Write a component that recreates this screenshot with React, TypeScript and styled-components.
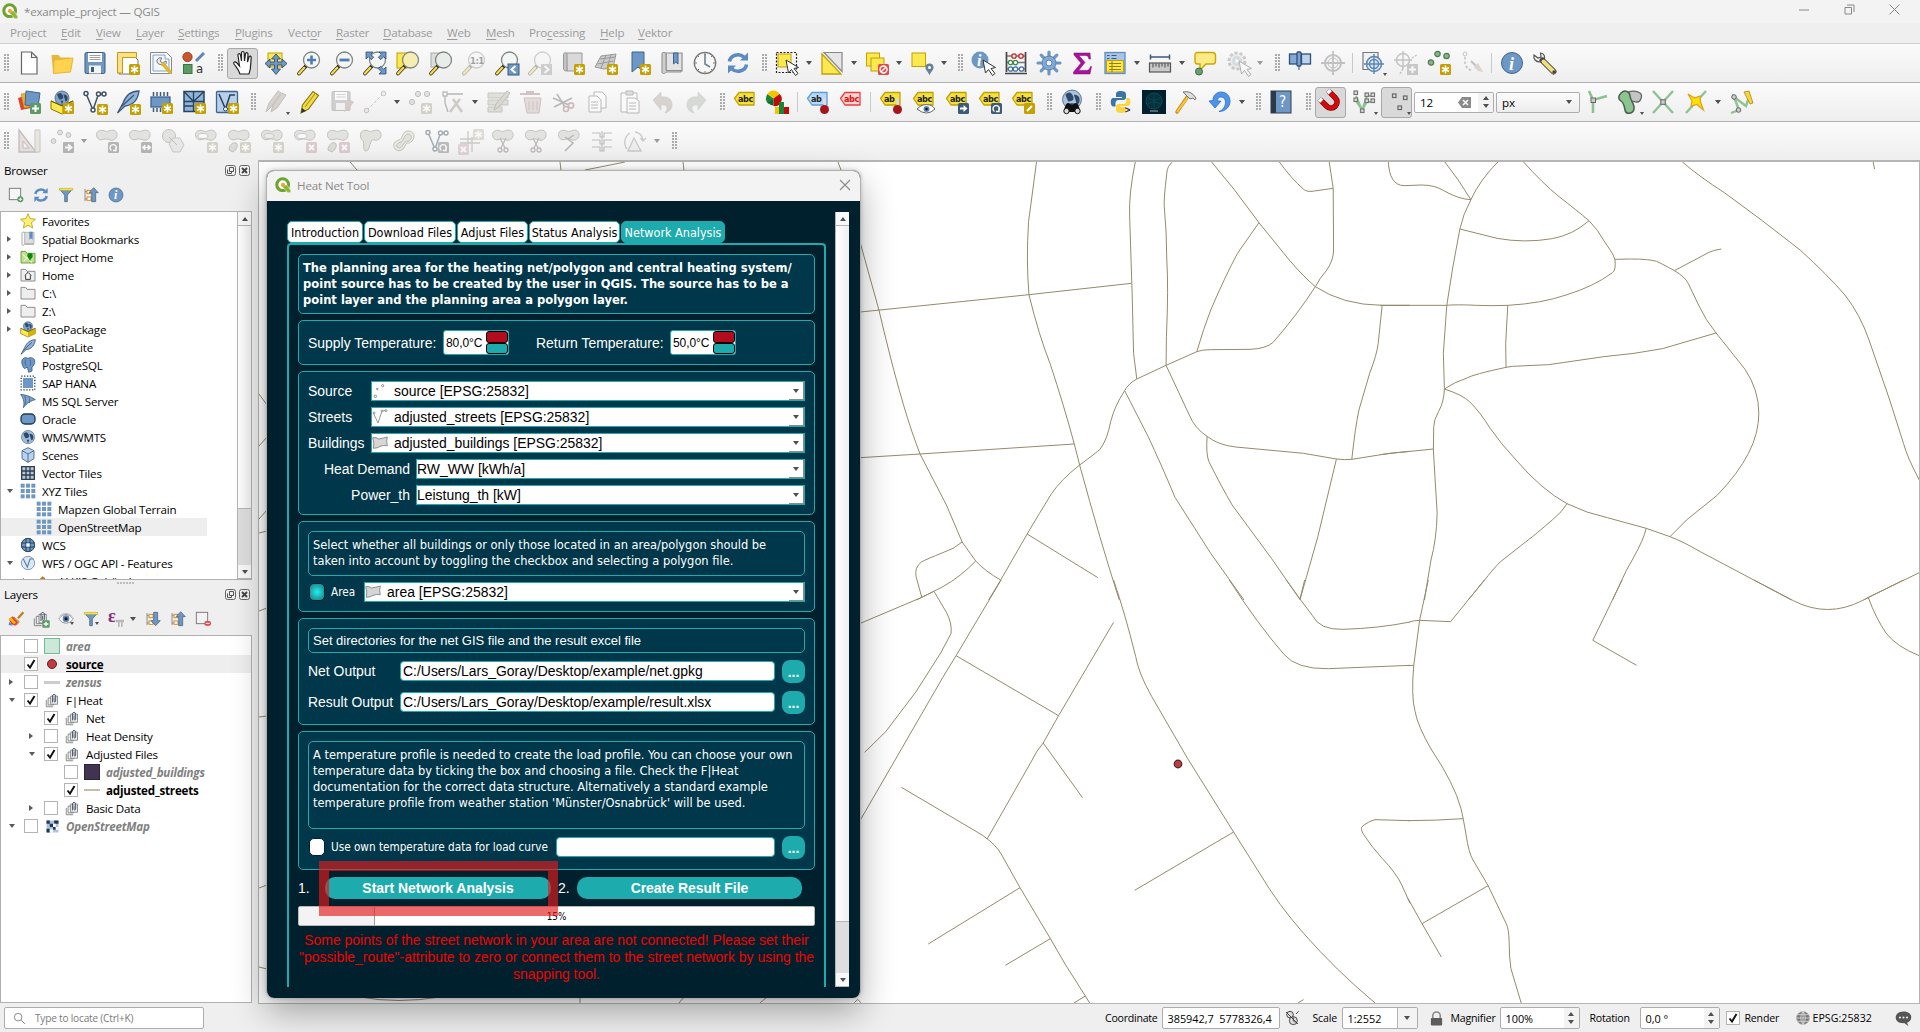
import React, { ReactNode } from "react";
import styled, { createGlobalStyle, css } from "styled-components";

/* ---------- palette ---------- */
const c = {
  teal: "#1eabad",
  deep: "#00202d",
  box: "#00374b",
  blue: "#6d97c4",
  navy: "#3d5a78",
  gold: "#c4a000",
  yellow: "#fce94f",
  green: "#8dc390",
  road: "#958a6c",
};

const ui = `"Open Sans", "Noto Sans", sans-serif`;
const dlg = `"DejaVu Sans Condensed", "DejaVu Sans", sans-serif`;
const arial = `"Liberation Sans", Arial, sans-serif`;

const Global = createGlobalStyle`
  * { box-sizing: border-box; }
  body { margin: 0; background: #efefef; overflow: hidden; }
`;

/* ---------- window frame ---------- */
const Window = styled.div`
  width: 1920px;
  height: 1032px;
  display: flex;
  flex-direction: column;
  background: #efefef;
  font-family: ${ui};
  font-size: 11.6px;
  letter-spacing: -0.2px;
  color: #000;
  overflow: hidden;
  position: relative;
  white-space: pre;
`;

const TitleBar = styled.header`
  height: 23px;
  flex: none;
  display: flex;
  align-items: center;
  gap: 6px;
  padding: 0 0 1px 2px;
  background: #f3f3f3;
  color: #8a8a8a;
`;

const WindowControls = styled.div`
  margin-left: auto;
  display: flex;
  align-items: center;
  gap: 34px;
  padding-right: 20px;
  margin-top: -3px;
`;

const MenuBar = styled.nav`
  height: 20px;
  flex: none;
  display: flex;
  align-items: center;
  padding: 0 0 2px 10px;
  background: #efefef;
  color: #9b9b9b;
`;

const MenuItem = styled.span<{ $w: number }>`
  width: ${(p) => p.$w}px;
  u { text-underline-offset: 2px; }
`;

/* ---------- toolbars ---------- */
const ToolRow = styled.div`
  height: 39px;
  flex: none;
  display: flex;
  align-items: center;
  border-top: 1px solid #cfcfcf;
  background: linear-gradient(#fbfbfb, #eeeeee);
  & + & { border-top-color: #b0b0b0; }
`;

const Handle = styled.span<{ $w: number }>`
  width: ${(p) => p.$w}px;
  height: 18px;
  display: flex;
  justify-content: flex-end;
  padding-right: 3px;
  &::after {
    content: "";
    width: 5px;
    background: radial-gradient(circle at 1px 1px, #a9a9a9 0.7px, transparent 1px) 0 0 / 3px 3px;
  }
`;

const Divider = styled.span`
  width: 7px;
  height: 20px;
  display: flex;
  justify-content: center;
  &::after { content: ""; width: 1px; background: #c9c9c9; }
`;

const ToolButton = styled.span<{ $on?: boolean }>`
  width: 31px;
  height: 31px;
  margin: 0 1px;
  flex: none;
  display: grid;
  place-items: center;
  position: relative;
  border-radius: 3px;
  border: 1px solid ${(p) => (p.$on ? "#a8a8a8" : "transparent")};
  background: ${(p) => (p.$on ? "#d9d9d9" : "transparent")};
`;

const Caret = styled.span<{ $dim?: boolean; $corner?: boolean }>`
  width: 0;
  height: 0;
  flex: none;
  border: 3px solid transparent;
  border-top: 4px solid ${(p) => (p.$dim ? "#9a9a9a" : "#4f4f4f")};
  border-bottom: 0;
  margin: 0 3px;
  ${(p) => p.$corner && css`
    position: absolute; right: 0; bottom: 2px; margin: 0;
    border-width: 3px 2px 0;
  `}
`;

const Field = styled.span<{ $w: number; $h?: number }>`
  width: ${(p) => p.$w}px;
  height: ${(p) => p.$h ?? 21}px;
  flex: none;
  display: flex;
  align-items: center;
  padding-left: 5px;
  background: #fff;
  border: 1px solid #adadad;
  border-radius: 2px;
  overflow: hidden;
`;

const ButtonField = styled(Field)`
  background: linear-gradient(#fcfcfc, #ededed);
`;

const FieldEnd = styled.span<{ $w: number; $lined?: boolean }>`
  width: ${(p) => p.$w}px;
  align-self: stretch;
  margin-left: auto;
  display: flex;
  flex-direction: column;
  align-items: center;
  justify-content: center;
  gap: 4px;
  background: #f3f3f3;
  border-left: ${(p) => (p.$lined ? "1px solid #b5b5b5" : "0")};
`;

const Up = styled.span`
  border: 3px solid transparent;
  border-bottom: 4px solid #4f4f4f;
  border-top: 0;
`;

const Down = styled.span`
  border: 3px solid transparent;
  border-top: 4px solid #4f4f4f;
  border-bottom: 0;
`;

/* ---------- icons ---------- */
type P = { fill?: string; stroke?: string };
const Badge = ({ x = 13, y = 13, k = "star", off }: { x?: number; y?: number; k?: string; off?: boolean }) => (
  <g transform={`translate(${x} ${y})`}>
    <rect width="11" height="11" rx="1.5" fill={off ? (k === "star" ? "#b5b09a" : k === "x" ? "#c4a0a8" : "#777") : k === "arrow" || k === "turn" ? c.navy : k === "plus" ? "#5b9a63" : c.gold} />
    {k === "star" && <path d="M5.5 1.5v8M2 3.5l7 4M9 3.5l-7 4" stroke="#fff" strokeWidth="1.6" fill="none" />}
    {k === "plus" && <path d="M5.5 2v7M2 5.5h7" stroke="#fff" strokeWidth="2" />}
    {k === "arrow" && <path d="M2 4.4h3.5V2L9.5 5.5 5.5 9V6.6H2z" fill="#fff" />}
    {k === "turn" && <path d="M3.500 8.5A3.200 3.200 0 1 1 7.500 8M8 4.500v4h-3" stroke="#fff" strokeWidth="1.400" fill="none" />}
    {k === "both" && <path d="M1 5.500l3-2.500v5zM10 5.500l-3-2.500v5zM3 5.500h5" fill="#fff" stroke="#fff" strokeWidth="1" />}
    {k === "x" && <path d="M3 3l5 5M8 3l-5 5" stroke="#fff" strokeWidth="2" />}
    {k === "pen" && <path d="M3 8l5-5" stroke="#fff" strokeWidth="2" />}
  </g>
);
const Lens = ({ fill = "#f4f6f4", children }: { fill?: string; children?: ReactNode }) => (
  <g>
    <path d="M2 22.500L8.500 15.500" stroke="#3a3a20" strokeWidth="3.800" strokeLinecap="round" />
    <path d="M2 22.500L7.500 16.500" stroke="#fcd94f" strokeWidth="2.200" strokeLinecap="round" />
    <path d="M8 16l1.800-2" stroke="#222" strokeWidth="3" />
    <circle cx="14.500" cy="9" r="8" fill={fill} stroke="#7f8580" strokeWidth="1.300" />
    {children}
  </g>
);
const Cursor = ({ x = 11, y = 8 }: { x?: number; y?: number }) => (
  <path transform={`translate(${x} ${y})`} d="M0 0l2.500 13 3-3.500L9.500 15.500l2.500-2-4-5 4.500-1z" fill="#fff" stroke="#333" strokeWidth="1" strokeLinejoin="round" />
);
const Blob = ({ fill = "#cfcfcb", stroke = "#8e8e88" }: P) => (
  <path d="M1.500 5.500c0-4 5-5 8-3.500s4-.5 7-.8c4-.4 6 2 5.500 5.500s-4 5.500-7.500 4-5-.5-7.500 0-5.500-1-5.500-5.200z" fill={fill} stroke={stroke} />
);
const Tag = ({ fill = "#f5e03c", stroke = "#bfa300", text = "abc", color = "#222" }: P & { text?: string; color?: string }) => (
  <g>
    <path d="M1.500 8.500l4.500-6h15v12.500H6z" fill={fill} stroke={stroke} strokeWidth="1.300" strokeLinejoin="round" />
    <text x="5" y="12" fontSize="9" fontFamily={dlg} fontWeight="700" fill={color} letterSpacing="-.4">{text}</text>
  </g>
);
const Globe = ({ x = 12, y = 12, r = 8, fill = "#7fa3cc" }) => (
  <g transform={`translate(${x} ${y})`}>
    <circle r={r} fill={fill} stroke="#4b5f75" strokeWidth=".8" />
    <path d={`M${-r * 0.7} ${-r * 0.5}q${r * 0.5} ${-r * 0.5} ${r * 0.8} ${r * 0.1}t${-r * 0.5} ${r * 0.6}zM${r * 0.2} ${-r * 0.5}q${r * 0.6} 0 ${r * 0.6} ${r * 0.5}t${-r * 0.3} ${r * 0.5}zM${-r * 0.2} ${r * 0.4}l${r * 0.4} 0l${-r * 0.2} ${r * 0.5}z`} fill="#2f4a68" />
  </g>
);
const Vee = ({ stroke = "#3f5266", fill = "#fff" }: P) => (
  <g stroke={stroke} fill={fill} strokeWidth="1.500">
    <path d="M3 3.500L10 20 15.500 4h6" fill="none" />
    <circle cx="3" cy="3.500" r="2" /><circle cx="10" cy="20" r="2" /><circle cx="15.500" cy="4" r="2" /><circle cx="21" cy="4" r="2" />
  </g>
);
const Pin = () => <g><path d="M18 8l1 8" stroke="#ddd" strokeWidth="2.500" /><circle cx="18.500" cy="19.500" r="4.500" fill="#a4161a" /></g>;
const Snips = () => (
  <g stroke="#8e7e80" fill="none" strokeWidth="1.300">
    <path d="M9 9l5 10M15 9l-5 10" /><circle cx="9" cy="21" r="2" /><circle cx="15" cy="21" r="2" />
  </g>
);
const Refresh = () => (
  <g fill="none" stroke="#5b8bc4" strokeWidth="3.600">
    <path d="M3.500 10.500A8.500 7.500 0 0 1 18 6" /><path d="M20.500 13.500A8.500 7.500 0 0 1 6 18" />
    <path d="M22 1.500v8h-8zM2 22.500v-8h8z" fill="#5b8bc4" stroke="none" />
  </g>
);
const Funnel = () => <g><path d="M2 3h20l-8 9v10h-4V12z" fill={c.blue} stroke={c.navy} /><path d="M2 2h20v3H2z" fill={c.yellow} stroke={c.gold} strokeWidth=".6" /></g>;
const Info = () => <g><circle cx="12" cy="12" r="10.500" fill="#6d97c4" stroke="#3f648f" /><text x="9" y="18.500" fontSize="18" fontFamily={`"Liberation Serif", serif`} fontStyle="italic" fontWeight="700" fill="#fff">i</text></g>;
const Grid = ({ s = c.blue }) => <g fill={s}>{[1, 9, 17].flatMap((x) => [1, 9, 17].map((y) => <rect key={`${x}${y}`} x={x} y={y} width="6" height="6" />))}</g>;
const Feather = () => <path d="M1.500 23L7 13C10 5 16 1 23 1c-1 8-5 14-14 15zM5 17L18 5" fill="#8fb3d9" stroke={c.navy} strokeWidth="1.300" />;
const Gpkg = () => (
  <g><path d="M1 11l11 4.500L23 11v8l-11 5L1 19z" fill={c.yellow} stroke="#8d7400" /><path d="M12 15.500V24l11-5v-8z" fill="#d6b500" /><Globe y={8} r={7} /><path d="M1 11l11 5 11-5" fill="none" stroke="#6c5a00" /></g>
);
const Folder = ({ fill = "#eee", stroke = "#888" }: P) => <path d="M1.500 3.500h7l2 3h12v14.500h-21z" fill={fill} stroke={stroke} strokeWidth="1.400" />;
const TreeArrow = ({ up = true }) => (
  <g>
    <path d="M3 3v18M3 7h4M3 18h4" stroke="#777" strokeWidth="1.200" fill="none" />
    <rect x="6" y="5" width="6" height="5" fill="#fff" stroke="#e08a1c" strokeWidth="1.500" /><rect x="6" y="15" width="6" height="5" fill="#fff" stroke="#e08a1c" strokeWidth="1.500" />
    <path d={up ? "M16 1l7 7.500h-4V22h-6V8.500H9z" : "M16 22l7-7.500h-4V2h-6v12.500H9z"} fill={c.blue} stroke={c.navy} strokeWidth="1" />
  </g>
);
const Group = () => (
  <g fill="#eee" stroke="#777" strokeWidth="1.300"><path d="M2 11v11h11M5 8h9v11H5z" /><path d="M9 5h11v13H9z" /><path d="M12 15V4.500c0-3 5-3 5 0V13c0 2-2.500 2-2.500 0V7" fill="none" stroke="#44546a" strokeWidth="1.500" /></g>
);
const Q = () => (
  <g>
    <circle cx="11.500" cy="11.500" r="8.800" fill="#fff" stroke="#6aa32f" strokeWidth="4.600" />
    <path d="M12 12h6l5.500 8v3.500h-4.500L12 15.500z" fill="#8db832" stroke="#fff" strokeWidth=".7" />
    <circle cx="12" cy="12" r="3.200" fill="#f2a43a" />
  </g>
);

const icons: Record<string, ReactNode> = {
  new: <path d="M4.500 1h10l5.500 5.500V23H4.500zM14.500 1v5.500H20" fill="#fff" stroke="#666" strokeWidth="1.200" />,
  open: <g><path d="M1.500 4h7l2 2.500h9V20H3z" fill="#e8b83c" /><path d="M4 9l19-2-2.500 14-17 1.500z" fill="#ffd34f" stroke="#eab52c" /></g>,
  save: <g><rect x="2" y="1.500" width="20" height="21" rx="1.500" fill={c.blue} stroke={c.navy} /><rect x="5" y="2" width="14" height="9" fill="#fff" /><path d="M6.500 4.500h11M6.500 6.500h11M6.500 8.500h11" stroke="#888" strokeWidth=".8" /><rect x="6" y="14.500" width="12" height="8" fill="#f4f4f4" /><rect x="8" y="16" width="3" height="5" fill={c.navy} /></g>,
  layout: <g><path d="M3 4h14l5 5v14H3z" fill="#fff" stroke="#777" /><path d="M1.500 1.500h19v5h-14V22h-5z" fill="#fbe08a" stroke="#c49b10" /><Badge /></g>,
  manager: <g><path d="M1.500 1.500h16l5 5v16h-21z" fill="#fff" stroke="#888" /><path d="M4 4h12v4h4v12H4z" fill="#f3f7ff" stroke="#7aa1d0" /><path d="M8 9a4 4 0 0 1 5-2l-2 3 2.500 2L17 10c1 3-1 5-3.500 4.500L12 13.500c-3 0-4.500-2-4-4.500z" fill="#eee" stroke="#777" /><path d="M14 13l7 8" stroke="#e0b62e" strokeWidth="3.500" strokeLinecap="round" /></g>,
  style: <g><circle cx="5.500" cy="6" r="4.600" fill="#c9572c" stroke="#9c3f1d" /><path d="M14 10l8-8" stroke="#5d86bb" strokeWidth="3" /><rect x="1.500" y="13.500" width="8.500" height="9" fill="#5c9c63" stroke="#3d7444" /><text x="14" y="22" fontSize="13" fontFamily={dlg} fill="#333">a</text></g>,
  hand: <path d="M9 23c-1-4-4-7-6-10-1-2 1-3 3-1l2.500 3L7 4.500c-.5-2 2-2.500 2.500-.5l1 6V2c0-2 2.500-2 2.700 0l.3 8 1-7c.3-2 2.500-1.700 2.500.3L16.500 11l1.500-5c.5-1.700 2.500-1 2.200.8C19.500 12 20.500 16 18 23z" fill="#fff" stroke="#222" strokeWidth="1.200" />,
  pan: <g><rect x="4" y="2" width="14" height="14" fill={c.yellow} stroke={c.gold} /><path d="M12 3l4.500 5h-3v3h4.500V8l5 4.500-5 4.500v-3h-4.500v4h3L12 23.500 7.500 18h3v-4H6v3l-5-4.500L6 8v3h4.500V8h-3z" fill={c.blue} stroke="#2f4f78" strokeWidth=".9" /></g>,
  zoomin: <Lens><path d="M14.500 4.500v9M10 9h9" stroke="#4d7db3" strokeWidth="2.600" /></Lens>,
  zoomout: <Lens><path d="M9.500 9h10" stroke="#4d7db3" strokeWidth="2.800" /></Lens>,
  zoomfull: <g><Lens /><path d="M3 1h7L7.700 3.300l3 3-2.400 2.400-3-3L3 8zM23 1h-7l2.300 2.300-3 3 2.400 2.400 3-3L23 8zM23 23h-7l2.300-2.300-3-3 2.400-2.400 3 3L23 16z" fill={c.blue} stroke="#2f4f78" strokeWidth=".8" /></g>,
  zoomsel: <g><rect x="1" y="2" width="10" height="15" fill={c.yellow} stroke={c.gold} /><Lens fill="#f6eeb0" /></g>,
  zoomlayer: <g><rect x="2" y="2" width="11" height="14" fill="#ddd" stroke="#aaa" /><Lens fill="#e9edea" /></g>,
  native: <g opacity=".35"><Lens><text x="8" y="12.500" fontSize="9.500" fontWeight="700" fontFamily={dlg} letterSpacing="-.5">1:1</text></Lens></g>,
  zoomlast: <g><Lens /><rect x="13" y="13" width="11" height="11" fill={c.blue} stroke={c.navy} /><path d="M20.500 15l-4 3.500 4 3.500" stroke="#fff" strokeWidth="2" fill="none" /></g>,
  zoomnext: <g opacity=".35"><Lens /><rect x="13" y="13" width="11" height="11" fill="#888" /><path d="M16.500 15l4 3.500-4 3.500" stroke="#fff" strokeWidth="2" fill="none" /></g>,
  newmap: <g><path d="M6 20h15V2H5.500z" fill="#d8d9d8" stroke="#999" /><path d="M2.500 3.500C2.500 1 6 1 6 3.500V20c-3 0-3.500-1-3.500-3z" fill="#c4c4c4" stroke="#999" /><Badge /></g>,
  new3d: <g><path d="M1 16L7 5l15-2-3 14-9 1z" fill="#ccc" stroke="#999" /><path d="M3.500 13l16-3M6 8l15-2M7 17l5-13M13 17l4-13" stroke="#999" fill="none" /><Badge /></g>,
  bookmark: <g><path d="M5 1h12v20l-6-5-6 5z" fill={c.blue} stroke="#3f648f" /><Badge /></g>,
  book: <g><path d="M2 3c0-2 4-2 4 0v17h16V2H4" fill="#e3e3e3" stroke="#8d8d8d" strokeWidth="1.200" /><path d="M2 3v18c0 2 3 2 4 0h15v-1.500H6V3" fill="#cfcfcf" stroke="#8d8d8d" /><path d="M13.500 2h4.500v11l-2.200-2-2.300 2z" fill={c.blue} stroke="#3f648f" /></g>,
  clock: <g><circle cx="12" cy="12" r="10.700" fill="#f7f7f5" stroke="#777" strokeWidth="1.300" /><path d="M12 3v10l5 3" fill="none" stroke="#6d8392" strokeWidth="1.600" /><path d="M12 2v2M12 20v2M2 12h2M20 12h2M5 5l1 1M18 18l1 1M5 19l1-1M19 5l-1 1" stroke="#777" /></g>,
  refresh: <Refresh />,
  select: <g><rect x="1.500" y="1.500" width="20" height="20" fill="none" stroke="#222" strokeWidth="1.200" strokeDasharray="2 1.500" /><rect x="3" y="3" width="13" height="13" fill={c.yellow} stroke={c.gold} /><Cursor x={11} y={9} /></g>,
  selectval: <g><path d="M2 3v20h19z" fill={c.yellow} stroke={c.gold} strokeWidth="1.300" /><path d="M4 1.500h18v19z" fill="#e6e6e6" stroke="#888" strokeWidth="1.200" /></g>,
  deselect: <g><rect x="1.500" y="2" width="13" height="13" fill={c.yellow} stroke={c.gold} /><rect x="6" y="7" width="13" height="13" fill={c.yellow} stroke={c.gold} /><rect x="13" y="13" width="11" height="11" rx="1.500" fill="#e24a4a" /><circle cx="18.500" cy="18.500" r="3.500" fill="none" stroke="#fff" strokeWidth="1.400" /><path d="M16 21l5-5" stroke="#fff" strokeWidth="1.400" /></g>,
  selectloc: <g><rect x="2" y="2" width="13.500" height="13.500" fill={c.yellow} stroke={c.gold} /><path d="M19.500 24c-2-4-4-5-4-7.500a4 4 0 0 1 8 0c0 2.500-2 3.500-4 7.500z" fill="#65819a" /><circle cx="19.500" cy="16.500" r="1.500" fill="#fff" /></g>,
  identify: <g><circle cx="9" cy="9" r="8.500" fill={c.blue} /><text x="6" y="15" fontSize="16" fontStyle="italic" fontWeight="700" fontFamily={`"Liberation Serif", serif`} fill="#fff">i</text><Cursor x={12} y={9} /></g>,
  abacus: <g fill="none" strokeWidth="1.300"><path d="M2.500 1v20M21.500 1v20M1 22.500h22" stroke="#444" strokeWidth="1.700" /><path d="M3 5h18M3 11.500h18M3 18h18" stroke="#777" /><g fill="#fff"><g stroke="#c22"><circle cx="10" cy="5" r="2.200" /><circle cx="17" cy="5" r="2.200" /></g><g stroke="#3a8c4a"><circle cx="6.500" cy="11.500" r="2.200" /><circle cx="11.500" cy="11.500" r="2.200" /></g><g stroke="#456f9c"><circle cx="6.500" cy="18" r="2.200" /><circle cx="11.500" cy="18" r="2.200" /><circle cx="17.500" cy="18" r="2.200" /></g></g></g>,
  gear: <g><path d="M12 1v22M1 12h22M4.200 4.200l15.600 15.600M19.800 4.200L4.200 19.800" stroke="#6d97c4" strokeWidth="3.200" strokeLinecap="round" /><circle cx="12" cy="12" r="7" fill="#84a9d4" stroke="#5580b3" /><circle cx="12" cy="12" r="3" fill="#f3f3f3" stroke="#5580b3" /></g>,
  sigma: <path d="M4 2h16l.5 6H19c-.5-2.500-1.500-3.500-4-3.500H9l6 7-6.500 8H16c2.500 0 3.500-1 4.500-4h1L20 23H3.500v-2l7.500-9-7-8z" fill="#a8129c" stroke="#7c0c73" strokeWidth=".5" />,
  table: <g><rect x="2" y="1.500" width="20" height="21" fill="#a9c5e6" stroke="#5f8dc2" strokeWidth="1.300" /><path d="M4 4.500h2.500M8.500 4.500h5M4 7.500h2.500M8.500 7.500h5" stroke="#3d5a78" strokeWidth="1.200" /><rect x="3.500" y="9.500" width="17" height="11.500" fill={c.yellow} stroke={c.gold} /><path d="M6 12.500h12M6 15.500h12M6 18.500h12M9 10v11" stroke="#9a7d00" strokeWidth="1" /></g>,
  ruler: <g><path d="M2.500 6h19M2.500 3.500v5M21.500 3.500v5" stroke={c.navy} strokeWidth="1.500" /><rect x="1.500" y="12" width="21" height="9" fill="#c9c9c9" stroke="#555" strokeWidth="1.200" /><path d="M5 12.500v4M8 12.500v3M11 12.500v4M14 12.500v3M17 12.500v4M20 12.500v3" stroke="#444" /></g>,
  tip: <g><path d="M2 4q0-2.500 2.500-2.500h15Q22 1.500 22.500 4v6q0 3-2.500 3h-7l-6 6V13H4.500Q2 13 2 10z" fill="#fbea85" stroke="#c9a700" strokeWidth="1.400" /><circle cx="6" cy="20.500" r="3.500" fill="#6b9f6e" stroke="#3d6b40" /></g>,
  action: <g opacity=".35"><circle cx="11" cy="10" r="8" fill="#ddd" stroke="#777" strokeWidth="3" strokeDasharray="3 2" /><circle cx="11" cy="10" r="5" fill="#9ab" /><path d="M9.500 7.500l4 2.500-4 2.500z" fill="#fff" /><Cursor x={13} y={10} /></g>,
  swipe: <g><rect x="1.500" y="3" width="9" height="10" fill="#84a9d4" stroke="#2f4f78" strokeWidth="1.300" /><rect x="13.500" y="3" width="9" height="10" fill="#b9d3ee" stroke="#2f4f78" strokeWidth="1.300" /><rect x="9" y="1" width="4" height="14" rx="1" fill="#7da2cf" stroke="#2f4f78" strokeWidth="1.300" /><path d="M11 15v4" stroke="#2f4f78" /></g>,
  gps: <g opacity=".4" stroke="#777" fill="none"><circle cx="12" cy="12" r="8" strokeWidth="2" /><circle cx="12" cy="12" r="5" /><path d="M12 0v24M0 12h24" strokeWidth="1.800" /></g>,
  gpsmap: <g><path d="M2 1.500h15v17H2z" fill="#f2f2f2" stroke="#777" strokeWidth="1.200" /><g stroke="#5b86b8" fill="#dfe9f4" strokeWidth="1.500"><circle cx="13" cy="13" r="7.500" /><circle cx="13" cy="13" r="4.500" /><path d="M13 3v20M3 13h20" /></g></g>,
  gpsadd: <g opacity=".4"><g stroke="#777" fill="none" strokeWidth="1.400"><circle cx="9" cy="9" r="6.500" /><path d="M9 0v18M0 9h18" /><path d="M9 18l-4 6M18 7l5-3" strokeDasharray="2 1.500" /></g><rect x="13" y="13" width="11" height="11" fill="#888" /><path d="M18.500 15v7M15 18.500h7" stroke="#fff" strokeWidth="2" /></g>,
  gpspts: <g><g fill="#83b986" stroke="#4f7a52" strokeWidth="1.200"><circle cx="10.500" cy="3" r="2.700" /><circle cx="19.500" cy="5" r="2.700" /><circle cx="4" cy="11.500" r="2.700" /></g><Badge /></g>,
  gpsreset: <g opacity=".4" fill="none" stroke="#777"><circle cx="5" cy="3" r="2" /><path d="M5 6v6q1 6 8 8" strokeDasharray="2.500 2" strokeWidth="1.500" /><path d="M11 10l5 5" strokeWidth="2" /><path d="M14 16l4-4 5 9-5-1z" fill="#b9a695" stroke="none" /></g>,
  info: <Info />,
  wrench: <g><path d="M1 4l4 3 3-1-.5-4C11 2 13 6 10.500 9.500L7 11C3 11 0 8 1 4z" fill="#eee" stroke="#555" strokeWidth="1.200" /><path d="M9.500 9.500l11 11" stroke="#444" strokeWidth="6" strokeLinecap="round" /><path d="M10.500 10.500l10 10" stroke="#f2dc7c" strokeWidth="4" strokeLinecap="round" /><path d="M20 20l2 2" stroke="#444" strokeWidth="3" /></g>,

  addlayer: <g><path d="M1 8l10-3 3 13-10 2z" fill="#d8452b" /><path d="M4 4l12-2 2 14-11 2z" fill="#efb02f" stroke="#b97c10" strokeWidth=".5" /><path d="M9 1l14 2-2 14-13-2z" fill="#6d97c4" stroke="#41658f" /><Badge k="plus" /></g>,
  gpkg: <g><Gpkg /><Badge /></g>,
  newshp: <g><Vee /><Badge x={14} y={14} /></g>,
  newspl: <g><Feather /><Badge x={14} y={14} /></g>,
  newmem: <g><rect x="2" y="7" width="19" height="10" fill={c.blue} stroke="#3f648f" strokeWidth="1.300" /><path d="M4.500 2v4M8 2v4M11.500 2v4M15 2v4M18.500 2v4M4.500 18v4M8 18v4M11.500 18v4" stroke={c.navy} strokeWidth="1.500" /><Badge /></g>,
  newmesh: <g><rect x="2" y="1.500" width="20" height="20" fill="#8fb3d9" stroke="#27415f" strokeWidth="1.500" /><path d="M2 11.500h20M11.500 1.500v20M2 1.500l9.500 10L22 1.500M2 16h9" stroke="#27415f" strokeWidth="1.300" fill="none" /><Badge /></g>,
  newvirt: <g><rect x="1.500" y="1.500" width="21" height="21" rx="1" fill="#b9d0ea" stroke="#3f648f" strokeWidth="1.300" /><path d="M4 4l6.500 15L15 5h5" fill="none" stroke="#27415f" strokeWidth="1.500" /><circle cx="10.500" cy="19" r="2" fill="#fff" stroke="#27415f" /><Badge /></g>,
  pencils: <g opacity=".45"><path d="M2 22l3-9L14 1l3 2-9 13zM7 22l2-7 9-12 4 2-9 13z" fill="#b3a79b" stroke="#8a8078" /></g>,
  pencil: <g><path d="M4 23l1.500-8L16 1.500l5.500 4L11.500 19z" fill="#f0dc4d" stroke="#8a7a13" strokeWidth="1.200" /><path d="M4 23l1-5 4 3z" fill="#333" /><path d="M8 17L18.500 3" stroke="#b39b16" strokeWidth="1.200" /></g>,
  savee: <g opacity=".4"><rect x="2" y="1.500" width="18" height="19" rx="1" fill="#999" stroke="#777" /><rect x="5" y="2" width="12" height="8" fill="#fff" /><path d="M6.500 4.500h9M6.500 7h9" stroke="#999" /><rect x="6" y="13" width="9" height="7" fill="#eee" /><path d="M14 22l2-6 5-6 3 2-6 8z" fill="#b58a82" /></g>,
  digitize: <g opacity=".45" fill="#ddd" stroke="#888"><path d="M4 20L20 4" strokeDasharray="3 2" /><circle cx="3.500" cy="20.500" r="2.300" /><circle cx="20.500" cy="3.500" r="2.300" /></g>,
  addpts: <g opacity=".5"><g fill="#cfcfcb" stroke="#888"><circle cx="10" cy="4" r="2.600" /><circle cx="19" cy="4" r="2.600" /><circle cx="4" cy="12" r="2.600" /></g><Badge off /></g>,
  vertex: <g opacity=".5" fill="none" stroke="#777" strokeWidth="1.300"><path d="M4 4h18M4 4v9l3 9" /><rect x="2" y="2" width="4" height="4" fill="#fff" /><path d="M9 22L19 9M12 9l9 13" strokeWidth="2.600" stroke="#a8a49b" /></g>,
  modattr: <g opacity=".5"><path d="M2 3h20v5H2zM2 10h20v5H2zM2 17h14v5H2z" fill="#c9cbb8" stroke="#999" /><path d="M8 20l2-6L21 1l3 2-11 14z" fill="#c5bfa5" stroke="#888" /></g>,
  trash: <g opacity=".42"><path d="M1 4h20M8 4V2h6v2" stroke="#a07a7a" strokeWidth="2" fill="none" /><path d="M5 8h17l-2 15H8z" fill="#ccbcbc" stroke="#a07a7a" /><path d="M10 11v9M14 11v9M18 11v9" stroke="#a07a7a" /></g>,
  cut: <g opacity=".55" stroke="#888" fill="none" strokeWidth="1.600"><path d="M1 8l16 7M2 17l18-9" /><circle cx="19" cy="15.500" r="2.600" stroke="#b08c8c" /><circle cx="14" cy="19" r="2.500" stroke="#b08c8c" /><path d="M5 4l8 13" /></g>,
  copy: <g opacity=".55" fill="#fff" stroke="#888"><path d="M9 2h8l4 4v12H9z" /><path d="M4 6h8l4 4v12H4z" /><path d="M6 12h7M6 15h7M6 18h7" /></g>,
  paste: <g opacity=".55" fill="#fff" stroke="#888"><path d="M3 3h16v19H3z" /><path d="M8 1h7v4H8z" fill="#ccc" /><path d="M9 8h8l4 3v12H9z" /><path d="M11 13h7M11 16h7M11 19h7" /></g>,
  undo: <path opacity=".45" d="M2 10l8-8v5c8-1 11 3 11 8 0 4-3 7-7 8 4-5 2-9-4-8v5z" fill="#b7a9a4" stroke="#9d918c" strokeWidth=".6" />,
  redo: <path opacity=".45" d="M22 10l-8-8v5c-8-1-11 3-11 8 0 4 3 7 7 8-4-5-2-9 4-8v5z" fill="#b4b9b0" stroke="#98a09a" strokeWidth=".6" />,
  tag: <Tag />,
  diagram: <g><path d="M7.500 8.500L1.500 4a7 7 0 0 0 1 10z" fill="#18843c" /><path d="M7.500 8.500L1.500 4a7 7 0 0 1 12 0z" fill="#f5c400" /><path d="M7.500 8.500L13.500 4a7 7 0 0 1-6 12z" fill="#c00a0a" /><path d="M7.500 8.500v7a7 7 0 0 1-5.500-3z" fill="#0d6b2c" /><path d="M9 17h4v7H9z" fill="#f5c400" /><path d="M13 12h5v12h-5z" fill="#18843c" /><path d="M18 17h5v7h-5z" fill="#c00a0a" /></g>,
  taginfo: <g><Tag fill="#b8daf8" stroke="#5a9ee0" text="ab" /><Pin /></g>,
  tagred: <Tag fill="#fcd5d5" stroke="#f03c3c" color="#e01010" />,
  tagpin: <g><Tag text="ab" /><Pin /></g>,
  tageye: <g><Tag /><path d="M5 19q6-6 13-4 3 1 5 4-4 4-8.500 4T5 19z" fill="#fff" stroke="#666" /><circle cx="14.500" cy="19" r="3" fill="#5b86b8" /><circle cx="14.500" cy="19" r="1.200" fill="#000" /></g>,
  tagmove: <g><Tag /><Badge k="arrow" /></g>,
  tagrot: <g><Tag /><Badge k="turn" /></g>,
  tagpen: <g><Tag /><Badge k="pen" /></g>,
  binoc: <g><Globe y={9.500} r={9.500} fill="#a9c2de" /><path d="M4 22c0-4 2-9 4-9s3 2 4 2 2-2 4-2 4 5 4 9z" fill="#111" /><circle cx="6.500" cy="21" r="2.700" fill="#ddd" stroke="#111" /><circle cx="17.500" cy="21" r="2.700" fill="#ddd" stroke="#111" /></g>,
  python: <g><path d="M12 1c-4 0-5 1.500-5 3v3h6v1H4c-3 0-3 8 0 8.500h2.500V13c0-2 1.500-3 3-3H14c2 0 3-1 3-2.500V4c0-2-2-3-5-3z" fill="#3c74a8" /><path d="M12 23c4 0 5-1.500 5-3v-3h-6v-1h8c3 0 3-7 1-8h-2.500v3c0 2-1.500 3-3 3H9.500C8 14 7 15 7 17v3c0 2 2 3 5 3z" fill="#fcd43f" /><text x="16" y="23" fontSize="9" fontFamily={arial} fill="#333" stroke="#333" strokeWidth=".4">&gt;</text></g>,
  fheat: <g><rect x="0" y="0" width="24" height="24" fill="#00202d" /><circle cx="12" cy="11" r="8" fill="#06303c" stroke="#0d5660" strokeWidth=".8" /><path d="M12 4v14M6 8q6 4 12 0M6 14q6-4 12 0" stroke="#0d5660" fill="none" strokeWidth=".6" /><path d="M8 21h8" stroke="#ccc" strokeWidth=".8" /></g>,
  hammer: <g><path d="M2 22L13 6" stroke="#d18a12" strokeWidth="3.500" strokeLinecap="round" /><path d="M2.500 21.500L12 8" stroke="#fbc63c" strokeWidth="2" strokeLinecap="round" /><path d="M8 2q8-2 13 6l-1 2-2-2-3 1-3-3z" fill="#ddd" stroke="#777" /></g>,
  reload: <path d="M5 10.500C5 5 9 2 13 2c5.500 0 9 4 9 9 0 6-4.500 10.500-11 10.500 4-1.500 6.500-5 6.500-9.500 0-3-2-5-4.500-5S9.500 8.500 9.500 11H13l-6 7-6-7z" fill="#4d93ea" stroke="#2a6fc9" strokeWidth=".8" />,
  help: <g><rect x="2" y="1" width="20" height="22" fill={c.blue} stroke="#333f4d" /><rect x="2" y="1" width="5" height="22" fill="#2b3a4a" /><text x="10" y="17" fontSize="15" fontFamily={dlg} fill="#fff">?</text></g>,
  magnet: <g transform="rotate(-45 12 12) translate(0 -1)"><path d="M6 4v9a6 6 0 0 0 12 0V4" fill="none" stroke="#6b0000" strokeWidth="5.600" /><path d="M6 4v9a6 6 0 0 0 12 0V4" fill="none" stroke="#d10b0b" strokeWidth="4.600" /><path d="M3.700 2.500h4.600v3.500H3.700zM15.700 2.500h4.600v3.500h-4.600z" fill="#fff" stroke="#888" strokeWidth=".6" /></g>,
  snaplayer: <g fill="#ddd" stroke={c.green} strokeWidth="2"><path d="M4 6l6 14 5-14h7M4 11l6 9 5-8h7" fill="none" /><g stroke="#777" strokeWidth="1.200"><rect x="2" y="1" width="3.500" height="3.500" /><rect x="2" y="8" width="3.500" height="3.500" /><rect x="13" y="3" width="3.500" height="3.500" /><rect x="19" y="3" width="3.500" height="3.500" /><rect x="13" y="9" width="3.500" height="3.500" /><rect x="19" y="9" width="3.500" height="3.500" /><rect x="8.500" y="19" width="3.500" height="3.500" /></g></g>,
  snappts: <g fill="#ddd" stroke="#666" strokeWidth="1.200"><rect x="7.500" y="4" width="3.500" height="3.500" /><rect x="18.500" y="6" width="3.500" height="3.500" /><rect x="13" y="16" width="3.500" height="3.500" /></g>,
  topo: <g><path d="M4 1l4 9v13M8 10l14-4" fill="none" stroke={c.green} strokeWidth="2.600" /><rect x="6" y="8" width="4.500" height="4.500" fill="#ccc" stroke="#666" /></g>,
  overlap: <g><path d="M9 3c3-3 10-2 13 0s1 9-3 9-6-2-8 0z" fill="#c4c4c4" stroke="#666" strokeWidth="1.300" /><path d="M3 3c4-4 9-1 9 3s5 8 4 13-8 6-9 1-1-7-4-9-3-5 0-8z" fill="#8cc48f" stroke="#4e5e4f" strokeWidth="1.500" /></g>,
  inter: <g><path d="M2 1l20 22M22 1L2 23" stroke={c.green} strokeWidth="2.400" /><rect x="9.800" y="9.800" width="4.500" height="4.500" fill="#ccc" stroke="#666" /></g>,
  selfsnap: <g><path d="M22 1L2 23" stroke={c.green} strokeWidth="2.400" /><path d="M4 4l6.500 4 5.500-2 .5 6 3 8-6.500-5.500-6 1.500 1-5z" fill="#ffe100" stroke="#e0a01c" strokeWidth="1.200" /></g>,
  trace: <g><path d="M2 23l8-3L5 7l12 9 3-9" fill="none" stroke={c.green} strokeWidth="2.400" /><circle cx="5" cy="7" r="2.300" fill="#ccc" stroke="#666" /><circle cx="9.500" cy="20" r="2.300" fill="#ccc" stroke="#666" /><path d="M15 2l5-1 4 12-3 1z" fill="#fbd33c" stroke="#a88a10" strokeWidth=".8" /></g>,

  square: <g opacity=".5"><path d="M2 1v22h17z" fill="#ddc9c0" stroke="#888" strokeWidth="1.300" /><path d="M6 12v7h6z" fill="#f5f5f5" stroke="#888" /><path d="M18 1h5v22h-5z" fill="#ddd9c0" stroke="#999" /></g>,
  move: <g opacity=".5"><g fill="#cfcfcb" stroke="#888"><circle cx="10" cy="3.500" r="2.400" /><circle cx="18.500" cy="6" r="2.400" /><circle cx="3.500" cy="12" r="2.400" /></g><rect x="13" y="13" width="11" height="11" rx="1" fill="#777" /><path d="M15 18.500h5M18 15.500l3.500 3-3.500 3" stroke="#fff" strokeWidth="1.800" fill="none" /></g>,
  rot: <g opacity=".5"><Blob /><Badge x={13} off k="turn" /></g>,
  scale: <g opacity=".5"><Blob /><Badge x={13} off k="both" /></g>,
  simplify: <g opacity=".5"><circle cx="8" cy="7" r="6.500" fill="#cfcfcb" stroke="#8e8e88" /><path d="M8 15l4-6h7l4 7-4 7h-7z" fill="#dcdcda" stroke="#999" /><path d="M8 8l8 8" stroke="#888" /></g>,
  ring: <g opacity=".5"><Blob /><ellipse cx="9" cy="7" rx="5" ry="2.500" fill="#fff" stroke="#999" /><Badge off /></g>,
  part: <g opacity=".5"><Blob /><path d="M2 21c0-5 4-8 7-7s0 8-3 9z" fill="#c4c4be" stroke="#8e8e88" /><Badge off /></g>,
  fill: <g opacity=".5"><Blob /><ellipse cx="9" cy="7" rx="5" ry="2.500" fill="#e4e4e0" stroke="#999" /><Badge off /></g>,
  delring: <g opacity=".5"><Blob /><ellipse cx="9" cy="7" rx="5" ry="2.500" fill="#fff" stroke="#999" /><Badge off k="x" /></g>,
  delpart: <g opacity=".5"><Blob /><path d="M2 21c0-5 4-8 7-7s0 8-3 9z" fill="#c4c4be" stroke="#8e8e88" /><Badge off k="x" /></g>,
  reshape: <path opacity=".5" d="M1.500 5.500c0-4 5-5 8-3.500s4-.5 7-.8c4-.4 6 2 5.500 5.500s-4 5.500-7.500 4S11 22 7 22 6 14 4 12s-2.500-2.300-2.500-6.500z" fill="#cfcfc6" stroke="#8e8e80" />,
  offset: <g opacity=".5"><path d="M3 20c-3-5 0-8 4-9s3-9 9-9 8 6 4 10-5 0-7 5-7 6-10 3z" fill="#e4e4d8" stroke="#8e8e80" /><path d="M5 18c-1-3 1-4 4-5s3-8 7-8 4 4 2 6-5 1-7 5-5 3-6 2z" fill="#cfcfc6" stroke="#8e8e80" /></g>,
  split: <g opacity=".45"><Vee /><Badge off k="turn" /></g>,
  merge: <g opacity=".4" stroke="#888" fill="none" strokeWidth="1.300"><path d="M2 10h20M2 14h20M10 2v20M14 8v15" /><g stroke="none"><Badge x={15} y={0} off /><Badge x={0} y={15} off k="x" /></g></g>,
  splitf: <g opacity=".5"><Blob /><Snips /></g>,
  splitp: <g opacity=".5"><Blob /><Snips /></g>,
  mergef: <g opacity=".5"><Blob /><path d="M8 8l8 6-8 8M17 6l-6 4" stroke="#777" fill="none" strokeWidth="1.500" /></g>,
  mergea: <g opacity=".45" stroke="#777" fill="none" strokeWidth="1.100"><path d="M2 4h8v4h4V4h8M2 11h8v4h4v-4h8M2 18h8v4h4v-4h8M12 2v20" /></g>,
  rotpt: <g opacity=".4" stroke="#888" fill="none" strokeWidth="1.300"><path d="M12 3q7 1 8 8M17.500 9l2.500 3 3-3M10 12v11M4 20a11 11 0 0 1 3-16" /><path d="M11 9l7 13H5z" fill="#e4e4e4" /></g>,

  addsel: <g><rect x="2" y="2" width="17" height="17" fill="#f6f6f6" stroke="#777" strokeWidth="1.400" /><circle cx="18.500" cy="18.500" r="4.500" fill="#5b9a63" /><path d="M18.500 16v5M16 18.500h5" stroke="#fff" strokeWidth="1.300" /></g>,
  funnel: <Funnel />,
  collapse: <TreeArrow />,
  expand: <TreeArrow up={false} />,
  brush: <g><path d="M23 2l-8 9" stroke="#c47e1d" strokeWidth="3.500" /><path d="M9 9l8 7-4 5-9-8z" fill="#e5a24a" stroke="#b5762a" /><path d="M1 12l6-4 8 9-4 5-6-2z" fill="#e43f3f" /><path d="M1 12l4-2.500 7 8-3 2z" fill="#f5c400" /><path d="M2 16l5 6-6-1z" fill="#4a86d8" /></g>,
  addgroup: <g><Group /><Badge k="plus" x={14} y={14} /></g>,
  eye: <g><path d="M1 12q5-7 11-7t11 7q-5 6.500-11 6.500T1 12z" fill="#fff" stroke="#888" strokeWidth="1.300" /><circle cx="12" cy="11.500" r="5" fill="#5b86b8" /><circle cx="12" cy="11.500" r="2.300" fill="#111" /><path d="M2 8q9-9 20 0" stroke="#aaa" fill="none" /></g>,
  expr: <g><text x="0" y="16" fontSize="27" fontFamily={`"Liberation Serif", serif`} fontWeight="700" fill="#86327d">ε</text><path d="M12 13h12v4h-2v7h-2.500v-7h-2v7h-2.500v-7h-3z" fill="#b9b9b9" /></g>,
  remove: <g><rect x="2" y="2" width="17" height="17" fill="#f2f2f2" stroke="#777" strokeWidth="1.400" /><rect x="14" y="15" width="10" height="7" rx="3" fill="#e24a4a" /><path d="M16 18.500h6" stroke="#fff" strokeWidth="1.500" /></g>,

  star: <path d="M12 1l3.200 7.500 8 .7-6 5.300 1.800 8L12 18.300 5 22.500l1.800-8-6-5.300 8-.7z" fill="#fdf17a" stroke="#b99a00" strokeWidth="1.200" />,
  sbook: <g><path d="M3 3c0-2 4-2 4 0v16h14V2H5" fill="#ddd" stroke="#aaa" strokeWidth="1.200" /><path d="M3 3v17c0 2 3 2 4 0h14" fill="none" stroke="#aaa" strokeWidth="1.500" /><path d="M14 1h5v12l-2.500-2-2.500 2z" fill="#5d8dc4" /></g>,
  phome: <g><Folder fill="#c0e08a" stroke="#6d9b3a" /><path d="M4 8l14 12M6 18l6-6" stroke="#fff" strokeWidth="1.500" /><circle cx="15" cy="10" r="4" fill="#0a8a0a" /><path d="M11.500 11l3.500 7 3.500-7z" fill="#0a8a0a" /></g>,
  home: <g><Folder /><path d="M7 13l5-5 5 5M8.500 12.500v6h7v-6" fill="#fff" stroke="#333" strokeWidth="1.500" /></g>,
  folder: <Folder />,
  spkg: <Gpkg />,
  feather: <Feather />,
  pg: <g><path d="M5 2c3-2 6 0 7 0 3-2 9-1 10 3s-2 9-4 10v6l-5 2-2-8-2 1c-2 3-4 0-5-3C2 9 2 4 5 2z" fill={c.blue} stroke="#2f5580" strokeWidth="1.200" /><path d="M8 4q-1 6 1 9M15 4q2 4 0 9" stroke="#2f5580" fill="none" /></g>,
  hana: <g><rect x="4.500" y="4.500" width="15" height="15" fill="#6d97c4" /><rect x="1.800" y="1.800" width="20.400" height="20.400" fill="none" stroke="#27415f" strokeWidth="2" strokeDasharray="2 2.300" /></g>,
  mssql: <path d="M1 2c8 1 15 3 22 8-6 1-13 5-18 12 2-6 1-13-4-20zM7 4c2 5 2 10 0 14M13 6c2 3 2 6 1 9" fill="#7ea3cd" stroke="#3f648f" strokeWidth="1.300" />,
  oracle: <rect x="1.500" y="4.500" width="21" height="15" rx="6" fill={c.blue} stroke="#1f3a5a" strokeWidth="2" />,
  globe: <Globe r={10} fill="#9dbbdd" />,
  scenes: <g fill="#bcd2ea" stroke="#3f648f" strokeWidth="1.300"><path d="M12 1l9 4.500v12L12 23l-9-5.500v-12z" /><path d="M3 5.500l9 5 9-5M12 10.500V23" /></g>,
  vtiles: <path d="M2.500 2.500h19v19h-19zM2.500 9h19M2.500 15h19M9 2.500v19M15 2.500v19" fill="#b9c8d8" stroke="#2f3f52" strokeWidth="2" />,
  grid: <Grid />,
  wcs: <g><circle cx="12" cy="12" r="10" fill="#6d97c4" stroke="#27415f" strokeWidth="1.500" /><path d="M2 9h20M2 15h20M9 2v20M15 2v20" stroke="#27415f" strokeWidth="1.500" /><path d="M9.500 9.500h5v5h-5z" fill="#fff" /></g>,
  wfs: <g><circle cx="12" cy="12" r="10" fill="#dbe7f4" stroke="#6d8fb5" strokeWidth="1.300" /><path d="M5 6l6 12 4-12h5" fill="none" stroke="#5a7ba3" strokeWidth="1.600" /></g>,
  afs: <path d="M2 12l8-7 4 3-5 8z" fill="#c47e1d" />,
  group: <Group />,
  raster: <g><rect x="1" y="1" width="22" height="22" fill="#a9c3e6" /><path d="M1 1h6v6H1zM15 1h8v6h-8zM7 7h6v6H7zM13 13h5v5h-5zM1 16h6v7H1z" fill="#243450" /><path d="M13 7h5v6h-5zM7 17h6v6H7zM18 13h5v5h-5z" fill="#fff" /></g>,
  logo: <Q />,
  points: <g fill="none" stroke="#777" strokeWidth="1.300"><circle cx="16" cy="4" r="1.600" /><circle cx="8" cy="9" r="1.200" /><circle cx="5" cy="20" r="1.800" /></g>,
  lines: <g fill="#fff" stroke="#888" strokeWidth="1.300"><path d="M2 6l7 15 6-18 7-1" fill="none" /><circle cx="3" cy="6" r="1.500" /><circle cx="15" cy="3" r="1.500" /><circle cx="21" cy="2.500" r="1.500" /></g>,
  poly: <path d="M1 4q6-1 9 2 6-1 13-3-2 6 0 13-6-1-11 1-4 3-10 3 2-8-1-16z" fill="#d6d6d6" stroke="#888" strokeWidth="1.400" />,
  gpsmouse: <g stroke="#333" fill="#ddd" strokeWidth="1.300"><circle cx="9" cy="7" r="5" /><circle cx="14" cy="16" r="6" /><path d="M3 3l18 18M14 11v5l3 3M18 6l4-4" fill="none" /></g>,
  lock: <g><path d="M6 11V7.500a6 6 0 0 1 12 0V11" fill="none" stroke="#8a8a8a" strokeWidth="2.500" /><rect x="3" y="11" width="18" height="12" rx="1.500" fill="#5c5c5c" /></g>,
  crs: <g stroke="#999" fill="none" strokeWidth="1.200"><circle cx="12" cy="12" r="9.500" fill="#777" /><path d="M2 12h20M4 7h16M4 17h16M12 2v20M12 2q-7 10 0 20M12 2q7 10 0 20" stroke="#ddd" /></g>,
  bubble: <g><path d="M12 2c7 0 11 3.500 11 8s-3 7-6 8l2 5-6-4.500C5 19 1 15 1 10.500S5 2 12 2z" fill="#555" /><g fill="#efefef"><circle cx="7" cy="10.500" r="1.500" /><circle cx="12" cy="10.500" r="1.500" /><circle cx="17" cy="10.500" r="1.500" /></g></g>,
  search: <g fill="none" stroke="#777" strokeWidth="1.600"><circle cx="9.500" cy="9.500" r="7" /><path d="M15 15l7 7" /></g>,
};

const Svg = styled.svg`
  display: block;
  flex: none;
  overflow: visible;
`;
const Icon = ({ n, s = 24 }: { n: string; s?: number }) => (
  <Svg width={s} height={s} viewBox="0 0 24 24">{icons[n]}</Svg>
);

/* A tool spec: "name", "name>" (menu arrow), "name>~" (dim arrow), "name." (corner arrow), "name!" (pressed), "|" divider, ":" handle */
const Tools = ({ spec }: { spec: string }) => (
  <>
    {spec.split(" ").map((t, i) => {
      if (t === "|") return <Divider key={i} />;
      if (t[0] === ":") return <Handle key={i} $w={+t.slice(1) || 16} />;
      const name = t.replace(/[^a-z0-9]/g, "");
      return (
        <React.Fragment key={i}>
          <ToolButton $on={t.includes("!")}>
            <Icon n={name} />
            {t.includes(".") && <Caret $corner />}
          </ToolButton>
          {t.includes(">") && <Caret $dim={t.includes("~")} />}
        </React.Fragment>
      );
    })}
  </>
);

/* ---------- body ---------- */
const Body = styled.div`
  flex: 1;
  display: grid;
  grid-template-columns: 252px 1fr;
  column-gap: 6px;
  min-height: 0;
  position: relative;
`;

const Side = styled.aside`
  display: flex;
  flex-direction: column;
  padding-top: 2px;
  min-height: 0;
`;

const PanelTitle = styled.div`
  height: 20px;
  flex: none;
  display: flex;
  align-items: center;
  justify-content: space-between;
  padding: 0 2px 3px 4px;
`;

const DockButtons = styled.span`
  display: flex;
  gap: 3px;
`;

const PanelTools = styled.div`
  height: 29px;
  flex: none;
  display: flex;
  align-items: center;
  padding: 0 0 3px 8px;
  gap: 9px;
`;

const SmallTool = styled.span`
  display: flex;
  align-items: center;
  position: relative;
`;

const MenuCaret = styled(Caret)`
  margin: 0 0 0 6px;
`;

const TreeBox = styled.div<{ $h: number }>`
  height: ${(p) => p.$h}px;
  flex: none;
  display: flex;
  background: #fff;
  border: 1px solid #b0b0b0;
  overflow: hidden;
`;

const TreeRows = styled.div<{ $pad: number }>`
  flex: 1;
  padding-top: ${(p) => p.$pad}px;
  overflow: hidden;
`;

const TreeRow = styled.div<{ $sel?: boolean; $w?: number }>`
  height: 18px;
  width: ${(p) => (p.$w ? `${p.$w}px` : "auto")};
  display: flex;
  align-items: center;
  background: ${(p) => (p.$sel ? "#eeeeee" : "transparent")};
`;

const Twisty = styled.span<{ $x: number; $s?: "open" | "shut"; $back: number }>`
  width: ${(p) => p.$x}px;
  flex: none;
  display: flex;
  justify-content: flex-end;
  padding-right: ${(p) => p.$back + (p.$s === "open" ? 0 : 2)}px;
  &::after {
    content: "";
    border: ${(p) => (p.$s ? "3.5px" : 0)} solid transparent;
    ${(p) => p.$s === "shut" && css`border-left: 4px solid #5a5a5a; border-right: 0;`}
    ${(p) => p.$s === "open" && css`border-top: 4px solid #5a5a5a; border-bottom: 0;`}
  }
`;

const TreeLabel = styled.span<{ $kind?: string }>`
  margin-left: 6px;
  margin-top: 1px;
  ${(p) => p.$kind === "off" && css`font-weight: 700; font-style: italic; color: #808080;`}
  ${(p) => (p.$kind === "bold" || p.$kind === "link") && css`font-weight: 700;`}
  ${(p) => p.$kind === "link" && css`text-decoration: underline; text-underline-offset: 2px;`}
`;

const Check = styled.span`
  width: 14px;
  height: 14px;
  flex: none;
  display: grid;
  place-items: center;
  background: #fff;
  border: 1px solid #b4b4b4;
`;

const Swatch = styled.span<{ $bg: string; $bd: string }>`
  width: 16px;
  height: 16px;
  background: ${(p) => p.$bg};
  border: 1px solid ${(p) => p.$bd};
`;
const Dash = styled.span<{ $c: string; $h: number }>`
  width: 16px;
  height: ${(p) => p.$h}px;
  background: ${(p) => p.$c};
`;
const Dot = styled.span`
  width: 10px;
  height: 10px;
  margin: 0 3px;
  border-radius: 50%;
  background: #c53a3c;
  border: 1px solid #4a2a2a;
`;
const Symbol = styled.span`
  width: 16px;
  margin-left: 6px;
  flex: none;
  display: flex;
  align-items: center;
  justify-content: center;
`;

const Scroll = styled.div`
  width: 14px;
  flex: none;
  display: flex;
  flex-direction: column;
  background: #dedede;
  border-left: 1px solid #b5b5b5;
`;
const ScrollEnd = styled.span`
  height: 14px;
  flex: none;
  display: grid;
  place-items: center;
  background: #f8f8f8;
  border-bottom: 1px solid #b5b5b5;
`;
const Thumb = styled.span<{ $h: number }>`
  height: ${(p) => p.$h}px;
  background: linear-gradient(90deg, #fff, #efefef);
  border-bottom: 1px solid #b5b5b5;
`;
const Grow = styled.span`
  flex: 1;
`;
const Splitter = styled.div`
  height: 6px;
  flex: none;
  display: grid;
  place-items: center;
  &::after {
    content: "";
    width: 18px;
    height: 2px;
    background: radial-gradient(circle at 1px 1px, #aaa 0.6px, transparent 1px) 0 0 / 3px 3px;
  }
`;

const MapFrame = styled.main`
  position: relative;
  background: #fff;
  border: 1px solid #b5b5b5;
  border-top: 2px solid #b5b5b5;
  overflow: hidden;
`;

const StatusBar = styled.footer`
  height: 28px;
  flex: none;
  display: flex;
  align-items: center;
  font-size: 10.6px;
`;
const StatusField = styled(Field)`
  font-size: 10.9px;
  letter-spacing: -0.02px;
`;
const Locate = styled(Field)`
  margin-left: 4px;
  padding-left: 8px;
  gap: 9px;
  font-size: 10.1px;
  color: #7b7b7b;
`;
const StatusLabel = styled.span<{ $ml: number; $w: number; $ls?: number }>`
  margin-left: ${(p) => p.$ml}px;
  width: ${(p) => p.$w}px;
  letter-spacing: ${(p) => p.$ls ?? -0.2}px;
`;
const Gap = styled.span<{ $w: number }>`
  width: ${(p) => p.$w}px;
  flex: none;
`;

/* ---------- dialog ---------- */
const Dialog = styled.section`
  position: absolute;
  left: 266px;
  top: 170px;
  width: 595px;
  height: 828px;
  display: flex;
  flex-direction: column;
  border-radius: 8px;
  overflow: hidden;
  border: 1px solid #b0b0b0;
  border-bottom: 0;
  background: ${c.deep};
  box-shadow: 0 14px 34px rgba(0, 0, 0, 0.32), 0 0 4px rgba(0, 0, 0, 0.2);
  letter-spacing: 0;
`;
const DialogTitle = styled.div`
  height: 30px;
  flex: none;
  display: flex;
  align-items: center;
  gap: 6px;
  padding: 0 9px 2px 8px;
  background: #f3f3f3;
  color: #8a8a8a;
  font-size: 11.6px;
  letter-spacing: -0.15px;
`;
const DialogBody = styled.div`
  flex: 1;
  display: flex;
  justify-content: space-between;
  padding: 11px 11px 11px 20px;
  min-height: 0;
`;
const DialogMain = styled.div`
  width: 539px;
  padding-top: 9px;
  display: flex;
  flex-direction: column;
`;
const Tabs = styled.div`
  display: flex;
  gap: 1px;
  height: 22px;
`;
const Tab = styled.span<{ $w: number; $on?: boolean }>`
  width: ${(p) => p.$w}px;
  display: grid;
  place-items: center;
  font-family: ${dlg};
  font-size: 12.5px;
  border: 1px solid ${c.teal};
  border-radius: 5px;
  background: ${(p) => (p.$on ? c.teal : "#fff")};
  color: ${(p) => (p.$on ? "#fff" : "#000")};
`;
const Pane = styled.div`
  flex: 1;
  border: 2px solid ${c.teal};
  border-bottom: 0;
  border-radius: 4px 4px 0 0;
  padding: 9px 9px 0;
  display: flex;
  flex-direction: column;
`;
const Card = styled.div<{ $h: number }>`
  height: ${(p) => p.$h}px;
  flex: none;
  margin-bottom: 6px;
  padding: 0 9px;
  border: 1px solid ${c.teal};
  border-radius: 5px;
  background: ${c.box};
  color: #fff;
  font-family: ${arial};
  font-size: 13.95px;
  display: flex;
  flex-direction: column;
`;
const Heading = styled.p`
  margin: 5px -5px 0;
  font: 700 12.84px/16px ${dlg};
`;
const Note = styled.p<{ $h: number; $plain?: boolean }>`
  height: ${(p) => p.$h}px;
  flex: none;
  margin: 9px 0 0;
  padding: ${(p) => (p.$plain ? 4 : 5)}px 4px 0;
  border: 1px solid ${c.teal};
  border-radius: 5px;
  font-family: ${(p) => (p.$plain ? arial : dlg)};
  font-size: ${(p) => (p.$plain ? 13 : 12.73)}px;
  line-height: 16px;
`;
const Line = styled.div<{ $mt: number; $h: number }>`
  height: ${(p) => p.$h}px;
  margin-top: ${(p) => p.$mt}px;
  flex: none;
  display: flex;
  align-items: center;
`;
const Label = styled.span<{ $w: number; $right?: boolean }>`
  width: ${(p) => p.$w}px;
  flex: none;
  text-align: ${(p) => (p.$right ? "right" : "left")};
  padding-right: ${(p) => (p.$right ? 6 : 0)}px;
`;
const SmallLabel = styled.span<{ $w: number }>`
  width: ${(p) => p.$w}px;
  margin-left: 6px;
  flex: none;
  font-family: ${dlg};
  font-size: 11.66px;
`;
const Combo = styled.span`
  flex: 1;
  height: 20px;
  display: flex;
  align-items: center;
  background: #fff;
  border: 1px solid ${c.teal};
  color: #000;
`;
const ComboIcon = styled.span`
  width: 22px;
  flex: none;
`;
const ComboDrop = styled.span`
  width: 15px;
  height: 18px;
  margin-left: auto;
  display: grid;
  place-items: center;
  border-right: 1px solid #8a8a8a;
  border-bottom: 1px solid #8a8a8a;
`;
const Spin = styled.span`
  width: 66px;
  height: 25px;
  display: flex;
  align-items: center;
  padding-left: 2px;
  background: #fff;
  border: 1px solid ${c.teal};
  border-radius: 3px;
  color: #000;
  font-size: 12px;
  letter-spacing: -0.1px;
`;
const SpinButtons = styled.span`
  width: 22px;
  margin-left: auto;
  align-self: stretch;
  display: grid;
  grid-template-rows: 1fr 1fr;
`;
const SpinHalf = styled.span<{ $c: string }>`
  background: ${(p) => p.$c};
  border: 1px solid #000;
  border-radius: 3px;
`;
const PathInput = styled.span`
  flex: 1;
  height: 20px;
  display: flex;
  align-items: center;
  padding-left: 2px;
  background: #fff;
  border: 1px solid ${c.teal};
  border-radius: 4px;
  color: #000;
`;
const Browse = styled.span`
  width: 23px;
  height: 23px;
  margin-left: 7px;
  border-radius: 8px;
  background: ${c.teal};
  text-align: center;
  font-weight: 700;
  line-height: 24px;
`;
const RoundCheck = styled.span<{ $on?: boolean }>`
  width: 16px;
  height: 18px;
  margin-left: 1px;
  flex: none;
  border: 1px solid ${c.deep};
  border-radius: 5px;
  background: ${(p) => (p.$on ? "radial-gradient(circle, #22f0ee, #1c9496 75%)" : "#fff")};
`;
const Actions = styled.div`
  height: 22px;
  margin-top: 1px;
  flex: none;
  display: flex;
  align-items: center;
  color: #fff;
  font: 13.95px ${arial};
  position: relative;
`;
const Action = styled.span<{ $w: number }>`
  width: ${(p) => p.$w}px;
  height: 22px;
  line-height: 22px;
  border-radius: 10px;
  background: ${c.teal};
  text-align: center;
  font-weight: 700;
`;
/* Translucent marker laid over the first action */
const Marker = styled.span`
  position: absolute;
  left: 21px;
  top: -16px;
  width: 239px;
  height: 55px;
  border: solid rgba(228, 26, 28, 0.65);
  border-width: 10px;
  z-index: 1;
`;
const Progress = styled.div`
  height: 20px;
  margin-top: 7px;
  flex: none;
  display: grid;
  place-items: center;
  background: linear-gradient(90deg, #f3f3f3 75px, #9e9e9e 75px 76px, #fff 76px);
  border: 1px solid #b9b9b9;
  border-radius: 2px;
  font: 9.8px ${dlg};
`;
const Warning = styled.p`
  margin: 6px -6px 0;
  text-align: center;
  color: #f20000;
  font: 13.95px/17.1px ${arial};
`;

/* ---------- map sheets (roads), each with its own local grid ---------- */
const NW = [
  "M523,0L500,185Q493,300 501,404Q530,530 560,610Q600,740 628,852L643,915Q700,1140 754,1320",
  "M29,250L81,450Q140,720 185,850L196,882L270,1035L314,1146L352,1203Q380,1235 422,1260",
  "M29,456L501,404L788,370",
  "M800,0Q780,100 783,170L790,400L794,580L803,657",
  "M903,6Q888,18 887,40Q878,120 880,140Q887,220 887,300Q892,380 886,530L885,616",
  "M803,657L885,616L971,575Q985,569 1010,569L1120,568Q1165,566 1185,547Q1255,460 1303,380Q1315,355 1335,330Q1354,300 1354,270L1353,85L1341,0",
  "M1008,0Q1080,90 1145,188L1230,300Q1270,350 1303,380Q1380,435 1490,436L1568,436",
  "M1145,188L1085,280Q1050,350 1010,450Q990,505 971,575",
  "M1198,0Q1235,55 1270,88Q1280,97 1300,93L1353,85",
  "M1490,436L1479,550Q1475,585 1455,640L1425,750Q1415,800 1405,898",
  "M803,657Q780,670 769,692Q740,740 730,785Q720,840 700,868Q690,878 643,915Q590,960 565,1000Q530,1060 496,1122L422,1260L388,1320",
  "M769,692L835,830Q870,910 910,1012L1010,1180L1103,1320",
  "M885,616L950,765Q965,805 1000,829Q1030,855 1080,861L1270,880L1362,897Q1385,900 1405,898L1510,880L1568,874",
  "M1000,829Q996,880 1005,905Q1040,980 1070,1035L1180,1195L1260,1319",
  "M1362,897L1310,1130L1260,1319",
  "M29,893L196,882L628,852",
  "M496,1122L694,1253",
  "M314,1146Q290,1168 260,1178Q215,1197 200,1206Q180,1222 185,1250L201,1312",
  "M352,1203Q310,1250 260,1280L201,1312L186,1320",
];
const NE = [
  "M24,0Q26,76 70,77L120,75Q160,75 185,92Q230,118 264,119",
  "M184,0Q230,60 264,119",
  "M343,5Q290,60 264,119Q240,165 232,207Q210,320 194,436Q188,520 184,580L187,687Q186,725 170,755Q156,780 156,800L155,870Q160,960 166,1060Q164,1140 148,1200L129,1320",
  "M232,207L340,235Q420,250 500,236Q560,225 607,182",
  "M416,5Q470,68 520,110Q570,150 607,182Q635,212 650,242Q672,275 677,285L682,298Q686,330 675,338Q620,380 540,405Q470,430 372,436Q320,438 280,436Q220,433 194,436L0,436",
  "M682,298L730,297Q780,297 803,304Q820,312 855,332Q885,350 895,370L925,435Q945,480 976,519L1060,628Q1100,690 1100,760Q1100,820 1070,880Q1040,940 980,1005L890,1080L842,1130",
  "M855,332L955,277Q970,270 991,267",
  "M976,519L820,566Q740,582 650,590L490,614L385,619L366,622Q270,643 250,655Q215,667 187,687",
  "M371,436L365,550L366,622",
  "M187,687Q240,705 260,725Q290,755 320,805Q350,850 395,900Q470,990 543,1031Q600,1060 660,1073L773,1105L842,1130Q880,1145 930,1175L1195,1320",
  "M543,1031Q530,1055 500,1080Q450,1125 430,1140L350,1205Q330,1225 300,1265L256,1320",
  "M773,1105Q765,1140 735,1195L715,1232L675,1320",
  "M0,884L50,878L155,867",
  "M878,6Q930,52 1000,98Q1110,180 1220,270Q1300,345 1350,405Q1395,465 1420,540Q1450,630 1480,720L1520,850Q1530,890 1566,960",
  "M1432,5L1436,27",
  "M1566,1238L1418,1312L1404,1320",
];
const SW = [
  "M29,130L201,52L235,34",
  "M235,34L270,97Q286,130 283,160L255,217L185,335L100,455L41,517",
  "M423,0L297,227L260,292L29,720",
  "M297,227L584,407",
  "M738,127L584,407L541,489Q522,512 510,540L384,777",
  "M541,489L651,653",
  "M144,622L370,765Q410,795 425,825L476,923L561,1076L605,1157L659,1248L671,1269",
  "M476,923L219,1092",
  "M561,1076L435,1156",
  "M659,1248L627,1269",
  "M738,0Q770,100 800,230Q808,280 845,350L945,535L1074,756L1150,885Q1200,975 1270,1060Q1360,1170 1470,1269",
  "M1074,756L797,931",
  "M1062,0Q1140,130 1215,223Q1250,268 1340,266L1568,256",
  "M1222,0L1260,57L1295,107Q1315,150 1380,148Q1480,145 1568,126",
  "M1273,0L1260,57",
  "M1568,722L1470,719Q1455,722 1435,738Q1428,747 1438,763Q1460,800 1490,835Q1530,880 1545,915L1568,970",
  "M1255,1268L1270,1259",
  "M12,1268L22,1258L30,1268",
];
const SE = [
  "M140,0L115,121L98,256Q90,350 102,395Q110,440 150,510Q215,610 235,685Q242,715 250,765Q258,820 270,840L314,917L366,1030Q374,1045 375,1085Q375,1130 380,1165L410,1269",
  "M85,126Q100,121 115,121L205,125L303,0",
  "M80,257L98,256",
  "M81,722Q160,722 241,716",
  "M703,0L618,181L745,256",
  "M1086,0L1200,62Q1300,115 1400,62L1520,0",
  "M1418,53Q1440,115 1470,160Q1500,200 1566,227",
  "M81,955L122,1031L178,1131",
  "M122,1031L314,917",
];
/* Short stubs that show around the dialog */
const EDGE = [
  "M259,394L267,405", "M259,446L267,437", "M259,519L267,510", "M259,533L267,531", "M259,611L267,608",
  "M259,717L267,716", "M259,888L267,885", "M259,967L267,969", "M350,162L357,170", "M560,162L561,170",
  "M585,170L625,162", "M683,162L684,170", "M838,162L841,170", "M360,997Q398,1004 440,997", "M580,997L580,1003",
  "M684,997L679,1003", "M767,997L760,1003",
];

const Roads = styled.g`
  fill: none;
  stroke: ${c.road};
  stroke-width: 1;
  path { vector-effect: non-scaling-stroke; }
`;

const sheets: [string[], number, number, number][] = [
  [NW, 850, 160, 560 / 1568],
  [NE, 1380, 160, 540 / 1568],
  [SW, 850, 580, 560 / 1568],
  [SE, 1380, 580, 540 / 1568],
];

const MapCanvas = () => (
  <Svg width="1660" height="841" viewBox="259 162 1660 841">
    {sheets.map(([paths, x, y, sx], i) => (
      <Roads key={i} transform={`translate(${x} ${y}) scale(${sx} ${1 / 3})`}>
        {paths.map((d) => <path key={d} d={d} />)}
      </Roads>
    ))}
    <Roads>{EDGE.map((d) => <path key={d} d={d} />)}</Roads>
    <circle cx="1178" cy="764" r="3.800" fill="#c53a3c" stroke="#3a2a2e" strokeWidth="1.200" />
  </Svg>
);

/* ---------- data ---------- */
const menus: [string, number, number][] = [
  ["Project", 3, 51], ["Edit", 0, 35], ["View", 0, 40], ["Layer", 0, 42], ["Settings", 0, 57], ["Plugins", 0, 53],
  ["Vector", 4, 48], ["Raster", 0, 47], ["Database", 0, 64], ["Web", 0, 39], ["Mesh", 0, 43], ["Processing", 3, 71],
  ["Help", 0, 38], ["Vektor", 0, 60],
];

const browser: [string, string, string?, number?][] = [
  ["star", "Favorites"], ["sbook", "Spatial Bookmarks", "shut"], ["phome", "Project Home", "shut"], ["home", "Home", "shut"],
  ["folder", "C:\\", "shut"], ["folder", "Z:\\", "shut"], ["spkg", "GeoPackage", "shut"], ["feather", "SpatiaLite"],
  ["pg", "PostgreSQL"], ["hana", "SAP HANA"], ["mssql", "MS SQL Server"], ["oracle", "Oracle"], ["globe", "WMS/WMTS"],
  ["scenes", "Scenes"], ["vtiles", "Vector Tiles"], ["grid", "XYZ Tiles", "open"], ["grid", "Mapzen Global Terrain", "", 1],
  ["grid", "OpenStreetMap", "", 1], ["wcs", "WCS"], ["wfs", "WFS / OGC API - Features", "open"], ["afs", "ALKIS Gebäude", "shut", 1],
];

type Layer = { name: string; x: number; on?: boolean; tw?: "open" | "shut"; kind?: string; sym: ReactNode };
const layers: Layer[] = [
  { name: "area", x: 23, kind: "off", sym: <Swatch $bg="#cde8d8" $bd="#6cbf92" /> },
  { name: "source", x: 23, on: true, kind: "link", sym: <Dot /> },
  { name: "zensus", x: 23, tw: "shut", kind: "off", sym: <Dash $c="#cccccc" $h={3} /> },
  { name: "F|Heat", x: 23, tw: "open", on: true, sym: <Icon n="group" s={15} /> },
  { name: "Net", x: 43, on: true, sym: <Icon n="group" s={15} /> },
  { name: "Heat Density", x: 43, tw: "shut", sym: <Icon n="group" s={15} /> },
  { name: "Adjusted Files", x: 43, tw: "open", on: true, sym: <Icon n="group" s={15} /> },
  { name: "adjusted_buildings", x: 63, kind: "off", sym: <Swatch $bg="#403450" $bd="#2c2438" /> },
  { name: "adjusted_streets", x: 63, on: true, kind: "bold", sym: <Dash $c="#c4bda8" $h={2} /> },
  { name: "Basic Data", x: 43, tw: "shut", sym: <Icon n="group" s={15} /> },
  { name: "OpenStreetMap", x: 23, tw: "open", kind: "off", sym: <Icon n="raster" s={13} /> },
];

const Tick = () => (
  <Svg width="10" height="10" viewBox="0 0 10 10"><path d="M1.500 5.500L4 8.500 8.500 1" fill="none" stroke="#111" strokeWidth="1.900" /></Svg>
);

const PanelHeader = ({ children }: { children: string }) => (
  <PanelTitle>
    {children}
    <DockButtons>
      <Svg width="11" height="11" viewBox="0 0 11 11"><rect x=".5" y=".5" width="10" height="10" rx="2" fill="none" stroke="#666" /><path d="M4.500 2.500h4v4h-4zM2.500 4.500v4h4v-2" fill="none" stroke="#555" /></Svg>
      <Svg width="11" height="11" viewBox="0 0 11 11"><rect x=".5" y=".5" width="10" height="10" rx="2" fill="none" stroke="#666" /><path d="M3 3l5 5M8 3l-5 5" stroke="#444" strokeWidth="1.800" /></Svg>
    </DockButtons>
  </PanelTitle>
);

const ScrollBar = ({ thumb }: { thumb: number }) => (
  <Scroll>
    <ScrollEnd><Up /></ScrollEnd>
    <Thumb $h={thumb} />
    <Grow />
    <ScrollEnd><Down /></ScrollEnd>
  </Scroll>
);

const Select = ({ icon, children }: { icon?: string; children: string }) => (
  <Combo>
    {icon && <ComboIcon><Icon n={icon} s={16} /></ComboIcon>}
    {children}
    <ComboDrop><Down /></ComboDrop>
  </Combo>
);

const SpinBox = ({ value }: { value: string }) => (
  <Spin>
    {value}
    <SpinButtons><SpinHalf $c="#b40c1f" /><SpinHalf $c={c.teal} /></SpinButtons>
  </Spin>
);

const HeatDialog = () => (
  <Dialog>
    <DialogTitle>
      <Icon n="logo" s={16} />
      Heat Net Tool
      <Grow />
      <Svg width="12" height="12" viewBox="0 0 12 12"><path d="M1 1l10 10M11 1L1 11" stroke="#8a8a8a" strokeWidth="1.100" /></Svg>
    </DialogTitle>
    <DialogBody>
      <DialogMain>
        <Tabs>
          <Tab $w={76}>Introduction</Tab>
          <Tab $w={92}>Download Files</Tab>
          <Tab $w={71}>Adjust Files</Tab>
          <Tab $w={91}>Status Analysis</Tab>
          <Tab $w={104} $on>Network Analysis</Tab>
        </Tabs>
        <Pane>
          <Card $h={60}>
            <Heading>
              {"The planning area for the heating net/polygon and central heating system/\npoint source has to be created by the user in QGIS. The source has to be a\npoint layer and the planning area a polygon layer."}
            </Heading>
          </Card>
          <Card $h={45}>
            <Line $mt={9} $h={25}>
              <Label $w={135}>Supply Temperature:</Label>
              <SpinBox value="80,0°C" />
              <Gap $w={27} />
              <Label $w={134}>Return Temperature:</Label>
              <SpinBox value="50,0°C" />
            </Line>
          </Card>
          <Card $h={144}>
            <Line $mt={9} $h={20}><Label $w={63}>Source</Label><Select icon="points">source [EPSG:25832]</Select></Line>
            <Line $mt={6} $h={20}><Label $w={63}>Streets</Label><Select icon="lines">adjusted_streets [EPSG:25832]</Select></Line>
            <Line $mt={6} $h={20}><Label $w={63}>Buildings</Label><Select icon="poly">adjusted_buildings [EPSG:25832]</Select></Line>
            <Line $mt={6} $h={20}><Label $w={108} $right>Heat Demand</Label><Select>RW_WW [kWh/a]</Select></Line>
            <Line $mt={6} $h={20}><Label $w={108} $right>Power_th</Label><Select>Leistung_th [kW]</Select></Line>
          </Card>
          <Card $h={91}>
            <Note $h={45}>{"Select whether all buildings or only those located in an area/polygon should be\ntaken into account by toggling the checkbox and selecting a polygon file."}</Note>
            <Line $mt={6} $h={20}>
              <RoundCheck $on />
              <SmallLabel $w={33}>Area</SmallLabel>
              <Select icon="poly">area [EPSG:25832]</Select>
            </Line>
          </Card>
          <Card $h={107}>
            <Note $h={25} $plain>Set directories for the net GIS file and the result excel file</Note>
            <Line $mt={6} $h={24}><Label $w={92}>Net Output</Label><PathInput>C:/Users/Lars_Goray/Desktop/example/net.gpkg</PathInput><Browse>...</Browse></Line>
            <Line $mt={7} $h={24}><Label $w={92}>Result Output</Label><PathInput>C:/Users/Lars_Goray/Desktop/example/result.xlsx</PathInput><Browse>...</Browse></Line>
          </Card>
          <Card $h={139}>
            <Note $h={88}>{"A temperature profile is needed to create the load profile. You can choose your own\ntemperature data by ticking the box and choosing a file. Check the F|Heat\ndocumentation for the correct data structure. Alternatively a standard example\ntemperature profile from weather station 'Münster/Osnabrück' will be used."}</Note>
            <Line $mt={6} $h={24}>
              <RoundCheck />
              <SmallLabel $w={225}>Use own temperature data for load curve</SmallLabel>
              <PathInput />
              <Browse>...</Browse>
            </Line>
          </Card>
          <Actions>
            <Label $w={27}>1.</Label>
            <Action $w={226}>Start Network Analysis</Action>
            <Gap $w={7} />
            <Label $w={19}>2.</Label>
            <Action $w={225}>Create Result File</Action>
            <Marker />
          </Actions>
          <Progress>15%</Progress>
          <Warning>{"Some points of the street network in your area are not connected! Please set their\n\"possible_route\"-attribute to zero or connect them to the street network by using the\nsnapping tool."}</Warning>
        </Pane>
      </DialogMain>
      <ScrollBar thumb={696} />
    </DialogBody>
  </Dialog>
);

export default function App() {
  return (
    <Window>
      <Global />
      <TitleBar>
        <Icon n="logo" s={16} />
        *example_project — QGIS
        <WindowControls>
          <Svg width="11" height="11" viewBox="0 0 11 11"><path d="M0 6h10" stroke="#888" /></Svg>
          <Svg width="11" height="11" viewBox="0 0 11 11"><path d="M1 3.500h6.500V10H1zM3 1h7v7" fill="none" stroke="#888" /></Svg>
          <Svg width="11" height="11" viewBox="0 0 11 11"><path d="M.5.500l10 10M10.500.500l-10 10" stroke="#888" /></Svg>
        </WindowControls>
      </TitleBar>
      <MenuBar>
        {menus.map(([m, u, w]) => (
          <MenuItem key={m} $w={w}>{m.slice(0, u)}<u>{m[u]}</u>{m.slice(u + 1)}</MenuItem>
        ))}
      </MenuBar>
      <ToolRow>
        <Tools spec=":12 new open save layout manager style : hand! pan zoomin zoomout zoomfull zoomsel zoomlayer native zoomlast zoomnext newmap new3d bookmark book clock refresh : select> selectval> deselect> selectloc> : identify abacus gear sigma table> ruler> tip action>~ :17 swipe gps | gpsmap. gpsadd gpspts gpsreset | info wrench" />
      </ToolRow>
      <ToolRow>
        <Tools spec=":12 addlayer gpkg newshp newspl newmem newmesh newvirt : pencils. pencil savee digitize> addpts vertex> modattr trash cut copy paste undo redo : tag diagram | taginfo tagred | tagpin tageye tagmove tagrot tagpen : binoc : python fheat hammer reload> : help :17 magnet! snaplayer. snappts.!" />
        <Gap $w={1} />
        <Field $w={80}>
          12
          <Gap $w={25} />
          <Svg width="13" height="11" viewBox="0 0 13 11"><path d="M4 0h9v11H4L0 5.500z" fill="#8a8a8a" /><path d="M5 3l5 5M10 3L5 8" stroke="#fff" strokeWidth="1.500" /></Svg>
          <FieldEnd $w={15}><Up /><Down /></FieldEnd>
        </Field>
        <Gap $w={2} />
        <ButtonField $w={84}>px<Grow /><Caret /><Gap $w={4} /></ButtonField>
        <Tools spec="topo overlap. inter selfsnap> trace" />
      </ToolRow>
      <ToolRow>
        <Tools spec=":12 square move>~ rot scale simplify ring part fill delring delpart reshape offset split merge splitf splitp mergef mergea rotpt>~ :17" />
      </ToolRow>
      <Body>
        <Side>
          <PanelHeader>Browser</PanelHeader>
          <PanelTools>
            {["addsel", "refresh", "funnel", "collapse", "info"].map((n) => <Icon key={n} n={n} s={16} />)}
          </PanelTools>
          <TreeBox $h={369}>
            <TreeRows $pad={0}>
              {browser.map(([icon, name, tw, d], i) => (
                <TreeRow key={i} $sel={i === 17} $w={i === 17 ? 206 : undefined}>
                  <Twisty $x={19 + (d ?? 0) * 16} $back={7} $s={(tw || undefined) as "open" | "shut" | undefined} />
                  <Icon n={icon} s={16} />
                  <TreeLabel>{name}</TreeLabel>
                </TreeRow>
              ))}
            </TreeRows>
            <ScrollBar thumb={283} />
          </TreeBox>
          <Splitter />
          <PanelHeader>Layers</PanelHeader>
          <PanelTools>
            {["brush", "addgroup", "eye.", "funnel.", "expr>", "expand", "collapse", "remove"].map((n) => (
              <SmallTool key={n}>
                <Icon n={n.replace(/[.>]/, "")} s={16} />
                {n.includes(".") && <Caret $corner />}
                {n.includes(">") && <MenuCaret />}
              </SmallTool>
            ))}
          </PanelTools>
          <TreeBox $h={368}>
            <TreeRows $pad={1}>
              {layers.map((l, i) => (
                <TreeRow key={i} $sel={i === 1}>
                  <Twisty $x={l.x} $back={9} $s={l.tw} />
                  <Check>{l.on && <Tick />}</Check>
                  <Symbol>{l.sym}</Symbol>
                  <TreeLabel $kind={l.kind}>{l.name}</TreeLabel>
                </TreeRow>
              ))}
            </TreeRows>
          </TreeBox>
        </Side>
        <MapFrame><MapCanvas /></MapFrame>
      </Body>
      <StatusBar>
        <Locate $w={200} $h={22}><Icon n="search" s={13} />Type to locate (Ctrl+K)</Locate>
        <StatusLabel $ml={901} $w={56.5} $ls={-0.25}>Coordinate</StatusLabel>
        <StatusField $w={118} $h={22}>385942,7  5778326,4</StatusField>
        <Gap $w={4} />
        <Icon n="gpsmouse" s={16} />
        <StatusLabel $ml={13} $w={29}>Scale</StatusLabel>
        <StatusField $w={76} $h={22}>1:2552<FieldEnd $w={20} $lined><Down /></FieldEnd></StatusField>
        <Gap $w={11} />
        <Icon n="lock" s={15} />
        <StatusLabel $ml={7} $w={49}>Magnifier</StatusLabel>
        <StatusField $w={80} $h={22}>100%<FieldEnd $w={15}><Up /><Down /></FieldEnd></StatusField>
        <StatusLabel $ml={10} $w={50}>Rotation</StatusLabel>
        <StatusField $w={80} $h={22}>0,0 °<FieldEnd $w={15}><Up /><Down /></FieldEnd></StatusField>
        <Gap $w={6} />
        <Check><Tick /></Check>
        <StatusLabel $ml={5} $w={50}>Render</StatusLabel>
        <Icon n="crs" s={16} />
        <StatusLabel $ml={2} $w={82} $ls={0.05}>EPSG:25832</StatusLabel>
        <Icon n="bubble" s={17} />
      </StatusBar>
      <HeatDialog />
    </Window>
  );
}
